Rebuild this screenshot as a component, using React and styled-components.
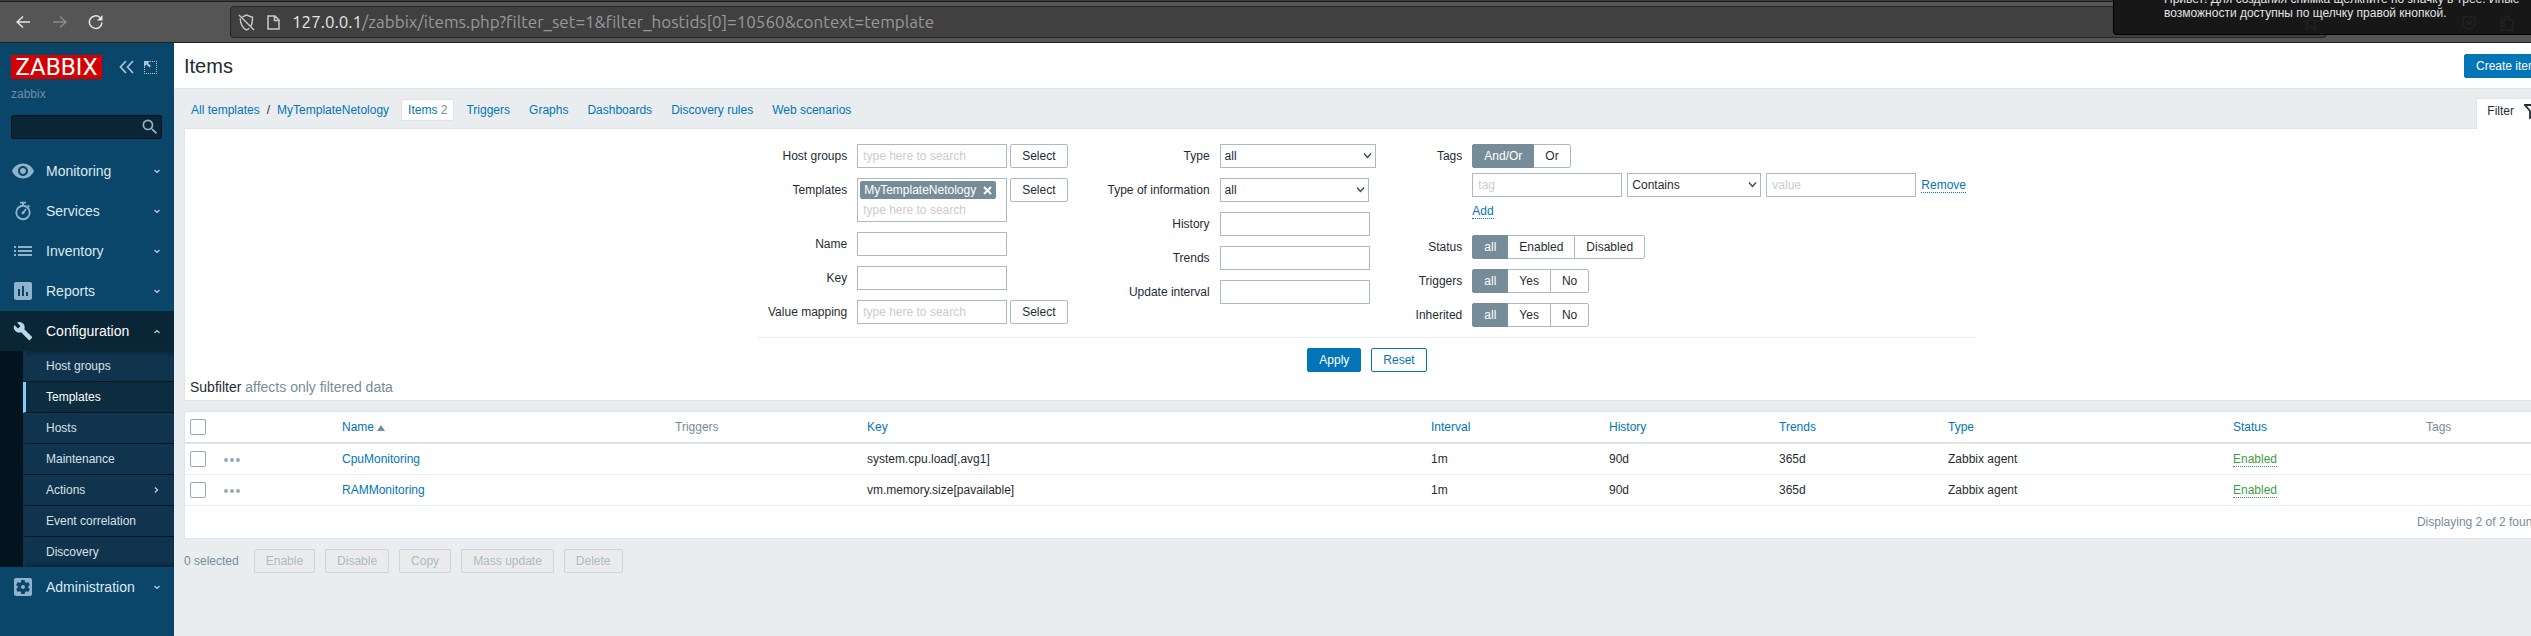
import React from "react";
import styled, { createGlobalStyle, css } from "styled-components";
import { MdVisibility, MdInsertChart, MdBuild, MdSettingsApplications, MdSearch } from "react-icons/md";

const GlobalStyle = createGlobalStyle`
  *, *::before, *::after { box-sizing: border-box; }
  body {
    margin: 0;
    background: #e9edf0;
    color: #1f2c33;
    font: 12px/18px "Liberation Sans", Arial, sans-serif;
  }
  input, button, select { font: inherit; color: inherit; }
  a { color: #0275b8; text-decoration: none; }
`;

const Viewport = styled.div`
  overflow: hidden;
  min-height: 100vh;
  display: flex;
`;

const Window = styled.div`
  position: relative;
  flex: 0 0 calc(100% + 29px);
  display: flex;
  flex-direction: column;
`;

/* Browser chrome */

const TabStrip = styled.div`
  height: 2px;
  background: #3b3b3b;
  border-bottom: 1px solid #1e1e1e;
`;

const Toolbar = styled.div`
  display: flex;
  align-items: center;
  height: 41px;
  padding: 0 16px;
  background: #555;
  border-bottom: 1px solid #222;
`;

const NavButtons = styled.div`
  display: flex;
  gap: 20px;
  width: 214px;
`;

const NavButton = styled.button`
  display: flex;
  padding: 0;
  border: 0;
  background: none;
  color: ${(p) => (p.disabled ? "#8a8a8a" : "#e6e6e6")};
`;

const AddressBar = styled.div`
  flex: 1;
  display: flex;
  align-items: center;
  gap: 12px;
  height: 32px;
  margin-right: 217px;
  padding: 0 7px;
  border: 1px solid #272727;
  border-radius: 4px;
  background: #404040;
  color: #c9c9c9;
`;

const Url = styled.div`
  color: #989898;
  font: 17px/30px Ubuntu, "Noto Sans", sans-serif;
  white-space: nowrap;
`;

const UrlHost = styled.span`
  color: #e4e4e4;
`;

const Notification = styled.div`
  position: absolute;
  top: 0;
  right: 0;
  display: flex;
  align-items: flex-end;
  width: 447px;
  height: 35px;
  padding: 0 16px 14px 50px;
  border: 1px solid #000;
  border-width: 0 0 1px 1px;
  border-bottom-left-radius: 4px;
  background: #171717;
  color: #e3e3e3;
  line-height: 14px;
  overflow: hidden;
`;

const NotificationText = styled.p`
  position: relative;
  z-index: 1;
  margin: 0;
  white-space: nowrap;
`;

const GhostIcons = styled.div`
  position: absolute;
  top: 15px;
  right: 0;
  display: flex;
  align-items: center;
  width: 257px;
  color: #222;
`;

const GhostIcon = styled.svg`
  flex: none;
  margin-right: ${(p) => p.$gap}px;
`;

/* Sidebar */

const Body = styled.div`
  flex: 1;
  display: flex;
`;

const Sidebar = styled.aside`
  flex: none;
  width: 174px;
  background: #0a466a;
`;

const Brand = styled.div`
  display: flex;
  align-items: center;
  padding: 12px 0 0 11px;
`;

const Logo = styled.a`
  flex: none;
  display: flex;
  justify-content: center;
  width: 91px;
  height: 24px;
  margin-right: 17px;
  background: #d40000;
  color: #fff;
  font: 24px/24px Roboto, "Liberation Sans", sans-serif;
`;

const BrandButton = styled.button`
  display: flex;
  margin-right: 10px;
  padding: 0;
  border: 0;
  background: none;
  color: #a9c4d6;
`;

const ServerName = styled.div`
  padding: 6px 11px 0;
  color: #6b8fa6;
`;

const Search = styled.form`
  display: flex;
  align-items: center;
  height: 24px;
  margin: 12px 12px 12px 11px;
  border: 1px solid #04121b;
  border-radius: 2px;
  background: #0a2536;
`;

const SearchInput = styled.input`
  flex: 1;
  min-width: 0;
  height: 22px;
  padding: 0 5px;
  border: 0;
  background: none;
  color: #fff;
  outline: 0;
`;

const SearchButton = styled.button`
  display: flex;
  padding: 0 1px 0 0;
  border: 0;
  background: none;
  color: #8fb3ca;
`;

const MenuLink = styled.a`
  display: flex;
  align-items: center;
  height: 40px;
  padding: 0 13px 0 11px;
  background: ${(p) => (p.$open ? "#0a2536" : "transparent")};
  color: ${(p) => (p.$open ? "#fff" : "#dfe8ee")};
  font-size: 14px;
`;

const MenuIcon = styled.span`
  display: flex;
  justify-content: center;
  width: 24px;
  margin-right: 11px;
  color: ${(p) => (p.$open ? "#b9d8ec" : "#8fb3ca")};
`;

const MenuLabel = styled.span`
  flex: 1;
`;

const SubMenu = styled.div`
  padding-left: 23px;
  background: #04141e;
`;

const SubLink = styled.a`
  display: flex;
  align-items: center;
  height: 31px;
  padding: 0 14px 0 20px;
  border-left: 3px solid ${(p) => (p.$active ? "#7ecbff" : "transparent")};
  border-bottom: 1px solid #051721;
  background: ${(p) => (p.$active ? "#0c2c40" : "#10344e")} border-box;
  color: ${(p) => (p.$active ? "#fff" : "#d5e0e7")};
  &:first-child { box-shadow: inset 0 6px 5px -4px #0a2536; }
  &:last-child {
    height: 30px;
    border-bottom: 0;
    box-shadow: inset 0 -6px 5px -4px #0a2536;
  }
`;

/* Buttons and fields */

const Button = styled.button`
  height: 24px;
  padding: 0 11px;
  border: 1px solid #acbbc2;
  border-radius: 2px;
  background: #fff;
  white-space: nowrap;
  line-height: 22px;
  ${(p) => p.$kind === "primary" && css`
    border-color: #0275b8;
    background: #0275b8;
    color: #fff;
  `}
  ${(p) => p.$kind === "outline" && css`
    border-color: #0275b8;
    color: #0275b8;
  `}
  &:disabled {
    border-color: #ccd5d9;
    background: #ebebeb;
    color: #acbbc2;
  }
`;

const TextInput = styled.input`
  width: 150px;
  height: 24px;
  padding: 0 5px;
  border: 1px solid #acbbc2;
  border-radius: 0;
  background: #fff;
  &::placeholder { color: #ccc; opacity: 1; }
`;

const SelectWrap = styled.span`
  position: relative;
  display: block;
  width: ${(p) => p.$width}px;
`;

const SelectBox = styled.select`
  appearance: none;
  width: 100%;
  height: 24px;
  padding: 0 4px;
  border: 1px solid #acbbc2;
  border-radius: 0;
  background: #fff;
`;

const SelectArrow = styled.svg`
  position: absolute;
  top: 8px;
  right: 4px;
  pointer-events: none;
`;

const TokenBox = styled.div`
  width: 150px;
  height: 44px;
  padding: 2px 2px 0;
  border: 1px solid #acbbc2;
`;

const Token = styled.span`
  display: flex;
  align-items: center;
  gap: 7px;
  width: max-content;
  height: 18px;
  padding: 0 4px;
  border-radius: 2px;
  background: #768d99;
  color: #fff;
`;

const TokenRemove = styled.button`
  display: flex;
  padding: 0;
  border: 0;
  background: none;
`;

const TokenInput = styled.input`
  display: block;
  width: 100%;
  height: 22px;
  padding: 0 3px;
  border: 0;
  background: none;
  outline: 0;
  &::placeholder { color: #ccc; opacity: 1; }
`;

const Segments = styled.div`
  display: flex;
`;

const Segment = styled.label`
  height: 24px;
  padding: 0 11px;
  border: 1px solid #acbbc2;
  background: #fff;
  line-height: 22px;
  & + & { margin-left: -1px; }
  &:first-child { border-radius: 2px 0 0 2px; }
  &:last-child { border-radius: 0 2px 2px 0; }
  &:has(input:checked) {
    position: relative;
    border-color: #768d99;
    background: #768d99;
    color: #fff;
  }
`;

const HiddenRadio = styled.input`
  position: absolute;
  opacity: 0;
  pointer-events: none;
`;

const DottedLink = styled.a`
  border-bottom: 1px dotted #0275b8;
  line-height: 14px;
`;

/* Content */

const Main = styled.main`
  flex: 1;
  min-width: 0;
`;

const PageHeader = styled.header`
  display: flex;
  align-items: center;
  justify-content: space-between;
  height: 46px;
  padding: 0 10px;
  border-bottom: 1px solid #dfe4e7;
  background: #fff;
`;

const Title = styled.h1`
  margin: 0;
  font-size: 20px;
  font-weight: 400;
  line-height: 24px;
`;

const Content = styled.div`
  padding: 0 10px;
`;

const TopRow = styled.div`
  display: flex;
  align-items: flex-end;
  justify-content: space-between;
`;

const Crumbs = styled.nav`
  display: flex;
  align-items: center;
  gap: 5px;
  height: 39px;
  padding-top: 2px;
`;

const Crumb = styled.a`
  height: 22px;
  padding: 0 6px;
  border: 1px solid ${(p) => (p.$active ? "#dfe4e7" : "transparent")};
  border-radius: 2px;
  background: ${(p) => (p.$active ? "#fff" : "none")};
  line-height: 20px;
`;

const Path = styled.div`
  display: flex;
  padding: 0 7px;
  gap: 7px;
`;

const Count = styled.span`
  color: #768d99;
`;

const FilterTab = styled.button`
  position: relative;
  display: flex;
  align-items: center;
  gap: 10px;
  height: 31px;
  margin-bottom: -1px;
  padding: 0 9px 6px 10px;
  border: 1px solid #dfe4e7;
  border-bottom: 0;
  border-radius: 2px 2px 0 0;
  background: #fff;
`;

const Panel = styled.section`
  border: 1px solid #dfe4e7;
  background: #fff;
`;

const FilterForm = styled.form`
  display: flex;
  flex-direction: column;
  align-items: center;
  padding-top: 15px;
`;

const FilterColumns = styled.div`
  display: flex;
  gap: 40px;
  padding: 0 10px 10px;
  border-bottom: 1px solid #ebeef0;
`;

const FieldGrid = styled.div`
  display: grid;
  grid-template-columns: auto auto;
  gap: 10px;
  align-content: start;
`;

const FieldLabel = styled.label`
  line-height: 24px;
  text-align: right;
  white-space: nowrap;
`;

const FieldRow = styled.div`
  display: flex;
  align-items: flex-start;
  gap: 3px;
`;

const TagFields = styled.div`
  display: grid;
  gap: 5px;
`;

const TagRow = styled.div`
  display: flex;
  align-items: center;
  gap: 5px;
`;

const AddRow = styled.div`
  height: 23px;
  line-height: 18px;
`;

const FormButtons = styled.div`
  display: flex;
  gap: 10px;
  padding-top: 10px;
`;

const Subfilter = styled.h2`
  margin: 0;
  padding: 6px 5px 4px;
  font-size: 14px;
  font-weight: 400;
  line-height: 18px;
`;

const Muted = styled.span`
  color: #768d99;
`;

const TablePanel = styled(Panel)`
  margin-top: 10px;
`;

const Table = styled.table`
  width: 100%;
  table-layout: fixed;
  border-collapse: separate;
  border-spacing: 0;
`;

const Th = styled.th`
  height: 32px;
  padding: 0 5px;
  border-bottom: 2px solid #dfe4e7;
  color: #768d99;
  font-weight: 400;
  text-align: left;
`;

const Td = styled.td`
  height: 31px;
  padding: 0 5px;
  border-bottom: 1px solid #ebeef0;
`;

const Checkbox = styled.input`
  appearance: none;
  display: block;
  width: 16px;
  height: 16px;
  margin: 0;
  border: 1px solid #97aab3;
  border-radius: 2px;
  background: #fff;
`;

const SortArrow = styled.span`
  display: inline-block;
  margin-left: 3px;
  border: 4px solid transparent;
  border-top: 0;
  border-bottom: 6px solid #768d99;
`;

const MoreButton = styled.button`
  display: flex;
  padding: 2px 0 0;
  border: 0;
  background: none;
`;

const StatusLink = styled.a`
  border-bottom: 1px dotted #429e47;
  color: #429e47;
`;

const TableFooter = styled.div`
  padding: 7px 10px;
  color: #768d99;
  text-align: right;
`;

const Actions = styled.div`
  display: flex;
  align-items: center;
  gap: 10px;
  padding: 10px 0;
`;

const Selected = styled.span`
  margin-right: 5px;
  color: #768d99;
`;

const Chevron = ({ dir = "down" }) => {
  const d = { down: "M1.500 3L4 5.500 6.500 3", up: "M1.500 6L4 3.500 6.500 6", right: "M3 1.500L5.500 4 3 6.500" }[dir];
  return (
    <svg width="8" height="8" viewBox="0 0 8 8" fill="none" stroke="#c3d5e0" strokeWidth="1.2">
      <path d={d} />
    </svg>
  );
};

const StopwatchIcon = () => (
  <svg width="20" height="20" viewBox="0 0 20 20" fill="none" stroke="currentColor" strokeWidth="1.9">
    <circle cx="10" cy="11.5" r="6.7" />
    <path d="M7 1.6h6M10 2v3M15 4.4l1.4 1.4" />
    <circle cx="10" cy="11.8" r="1.5" fill="currentColor" stroke="none" />
    <path d="M10 12l3-4" />
  </svg>
);

const ListIcon = () => (
  <svg width="18" height="12" viewBox="0 0 18 12" fill="currentColor">
    {[1, 5, 9].map((y) => (
      <path key={y} d={`M0 ${y}h2v2H0zM4 ${y}h14v2H4z`} />
    ))}
  </svg>
);

const Select = ({ id, width, value, label }) => (
  <SelectWrap $width={width}>
    <SelectBox id={id} defaultValue={value} aria-label={label}>
      <option>{value}</option>
    </SelectBox>
    <SelectArrow width="9" height="8" viewBox="0 0 9 8" fill="none" stroke="#39464d" strokeWidth="1.3">
      <path d="M1 1.5l3.5 4 3.5-4" />
    </SelectArrow>
  </SelectWrap>
);

const RadioGroup = ({ name, label, options }) => (
  <Segments role="radiogroup" aria-label={label}>
    {options.map((option, i) => (
      <Segment key={option}>
        <HiddenRadio type="radio" name={name} defaultChecked={i === 0} />
        {option}
      </Segment>
    ))}
  </Segments>
);

const menuTop = [
  ["Monitoring", <MdVisibility size={24} />],
  ["Services", <StopwatchIcon />],
  ["Inventory", <ListIcon />],
  ["Reports", <MdInsertChart size={24} />],
];

const subMenu = ["Host groups", "Templates", "Hosts", "Maintenance", "Actions", "Event correlation", "Discovery"];

const columns = [
  ["", 34],
  ["", 118],
  ["Name", 333, true],
  ["Triggers", 192],
  ["Key", 564, true],
  ["Interval", 178, true],
  ["History", 170, true],
  ["Trends", 169, true],
  ["Type", 285, true],
  ["Status", 193, true],
  ["Tags", 128],
];

const items = [
  { name: "CpuMonitoring", key: "system.cpu.load[,avg1]" },
  { name: "RAMMonitoring", key: "vm.memory.size[pavailable]" },
];

const MenuItem = ({ label, icon, open }) => (
  <MenuLink href="#" $open={open}>
    <MenuIcon $open={open}>{icon}</MenuIcon>
    <MenuLabel>{label}</MenuLabel>
    <Chevron dir={open ? "up" : "down"} />
  </MenuLink>
);

const BrowserBar = () => (
  <>
    <TabStrip />
    <Toolbar>
      <NavButtons>
        <NavButton aria-label="Back">
          <svg width="16" height="16" viewBox="0 0 16 16" fill="none" stroke="currentColor" strokeWidth="1.5">
            <path d="M14 8H1M7 2.500L1 8l6 5.500" />
          </svg>
        </NavButton>
        <NavButton aria-label="Forward" disabled>
          <svg width="16" height="16" viewBox="0 0 16 16" fill="none" stroke="currentColor" strokeWidth="1.5">
            <path d="M1 8h13M8 2.500L14 8l-6 5.500" />
          </svg>
        </NavButton>
        <NavButton aria-label="Reload">
          <svg width="16" height="16" viewBox="0 0 16 16" fill="none" stroke="currentColor" strokeWidth="1.5">
            <path d="M14 8.500A6.300 6.300 0 1 1 12 3.500" />
            <path d="M14.500 1v5.500H9z" fill="currentColor" stroke="none" />
          </svg>
        </NavButton>
      </NavButtons>
      <AddressBar>
        <svg width="17" height="17" viewBox="0 0 17 17" fill="none" stroke="currentColor" strokeWidth="1.4">
          <path d="M4.500 2.800L8.500 1l6 2.300c0 4-.3 6.500-1.500 8.700M11.300 14.300l-2.800 1.700C4 13.800 2.500 10 2.200 4.500M1 1l15 15" />
        </svg>
        <svg width="13" height="15" viewBox="0 0 13 15" fill="none" stroke="currentColor" strokeWidth="1.5">
          <path d="M1 1h7l4 4v9H1zM7.500 1v4.500H12" />
        </svg>
        <Url>
          <UrlHost>127.0.0.1</UrlHost>/zabbix/items.php?filter_set=1&amp;filter_hostids[0]=10560&amp;context=template
        </Url>
      </AddressBar>
    </Toolbar>
    <Notification role="status">
      <NotificationText>
        Привет! Для создания снимка щёлкните по значку в трее. Иные
        <br />
        возможности доступны по щелчку правой кнопкой.
      </NotificationText>
      <GhostIcons aria-hidden="true">
        <GhostIcon $gap={142} width="16" height="16" viewBox="0 0 16 16" fill="none" stroke="currentColor" strokeWidth="1.3">
          <path d="M8 1l2 5h5l-4 3 1.500 5.500L8 11.500l-4.500 3L5 9 1 6h5z" />
        </GhostIcon>
        <GhostIcon $gap={22} width="16" height="16" viewBox="0 0 16 16" fill="none" stroke="currentColor" strokeWidth="1.5">
          <path d="M2 2h12v6a6 6 0 0 1-12 0zM5 6l3 3 3-3" />
        </GhostIcon>
        <GhostIcon $gap={22} width="16" height="16" viewBox="0 0 16 16" fill="none" stroke="currentColor" strokeWidth="1.5">
          <path d="M2 5h4V3a2 2 0 0 1 4 0v2h4v10H2v-4h2a1.500 1.500 0 0 0 0-3H2z" />
        </GhostIcon>
        <GhostIcon $gap={0} width="16" height="16" viewBox="0 0 16 16" stroke="currentColor" strokeWidth="1.5">
          <path d="M1 3h14M1 8h14M1 13h14" />
        </GhostIcon>
      </GhostIcons>
    </Notification>
  </>
);

const SideNav = () => (
  <Sidebar>
    <Brand>
      <Logo href="#">ZABBIX</Logo>
      <BrandButton aria-label="Collapse sidebar">
        <svg width="15" height="14" viewBox="0 0 15 14" fill="none" stroke="currentColor" strokeWidth="1.7">
          <path d="M7 1L1.500 7 7 13M14 1L8.500 7l5.500 6" />
        </svg>
      </BrandButton>
      <BrandButton aria-label="Hide sidebar">
        <svg width="13" height="13" viewBox="0 0 13 13" fill="none" stroke="currentColor">
          <path d="M6 .500h7M12.500 2v11M.500 6v7M0 12.500h13" strokeDasharray="1 1" />
          <path d="M0 0h6L4 2l3 3-1.500 1.500L2.500 3.500 0 6z" fill="currentColor" stroke="none" />
        </svg>
      </BrandButton>
    </Brand>
    <ServerName>zabbix</ServerName>
    <Search role="search">
      <SearchInput aria-label="Search" />
      <SearchButton type="button" aria-label="Search">
        <MdSearch size={20} />
      </SearchButton>
    </Search>
    <nav>
      {menuTop.map(([label, icon]) => (
        <MenuItem key={label} label={label} icon={icon} />
      ))}
      <MenuItem label="Configuration" icon={<MdBuild size={20} />} open />
      <SubMenu>
        {subMenu.map((label) => (
          <SubLink key={label} href="#" $active={label === "Templates"}>
            <MenuLabel>{label}</MenuLabel>
            {label === "Actions" && <Chevron dir="right" />}
          </SubLink>
        ))}
      </SubMenu>
      <MenuItem label="Administration" icon={<MdSettingsApplications size={24} />} />
    </nav>
  </Sidebar>
);

const Filter = () => (
  <Panel>
    <FilterForm>
      <FilterColumns>
        <FieldGrid>
          <FieldLabel htmlFor="groups">Host groups</FieldLabel>
          <FieldRow>
            <TextInput id="groups" placeholder="type here to search" />
            <Button type="button">Select</Button>
          </FieldRow>
          <FieldLabel htmlFor="templates">Templates</FieldLabel>
          <FieldRow>
            <TokenBox>
              <Token>
                MyTemplateNetology
                <TokenRemove type="button" aria-label="Remove MyTemplateNetology">
                  <svg width="9" height="9" viewBox="0 0 9 9" stroke="#fff" strokeWidth="2">
                    <path d="M1 1l7 7M8 1L1 8" />
                  </svg>
                </TokenRemove>
              </Token>
              <TokenInput id="templates" placeholder="type here to search" />
            </TokenBox>
            <Button type="button">Select</Button>
          </FieldRow>
          <FieldLabel htmlFor="name">Name</FieldLabel>
          <TextInput id="name" />
          <FieldLabel htmlFor="key">Key</FieldLabel>
          <TextInput id="key" />
          <FieldLabel htmlFor="mapping">Value mapping</FieldLabel>
          <FieldRow>
            <TextInput id="mapping" placeholder="type here to search" />
            <Button type="button">Select</Button>
          </FieldRow>
        </FieldGrid>
        <FieldGrid>
          <FieldLabel htmlFor="type">Type</FieldLabel>
          <Select id="type" width={156} value="all" />
          <FieldLabel htmlFor="info">Type of information</FieldLabel>
          <Select id="info" width={149} value="all" />
          <FieldLabel htmlFor="history">History</FieldLabel>
          <TextInput id="history" />
          <FieldLabel htmlFor="trends">Trends</FieldLabel>
          <TextInput id="trends" />
          <FieldLabel htmlFor="interval">Update interval</FieldLabel>
          <TextInput id="interval" />
        </FieldGrid>
        <FieldGrid>
          <FieldLabel as="span">Tags</FieldLabel>
          <TagFields>
            <RadioGroup name="tags" label="Tags" options={["And/Or", "Or"]} />
            <TagRow>
              <TextInput placeholder="tag" aria-label="Tag" />
              <Select width={134} value="Contains" label="Operator" />
              <TextInput placeholder="value" aria-label="Value" />
              <DottedLink href="#">Remove</DottedLink>
            </TagRow>
            <AddRow>
              <DottedLink href="#">Add</DottedLink>
            </AddRow>
          </TagFields>
          <FieldLabel as="span">Status</FieldLabel>
          <RadioGroup name="status" label="Status" options={["all", "Enabled", "Disabled"]} />
          <FieldLabel as="span">Triggers</FieldLabel>
          <RadioGroup name="triggers" label="Triggers" options={["all", "Yes", "No"]} />
          <FieldLabel as="span">Inherited</FieldLabel>
          <RadioGroup name="inherited" label="Inherited" options={["all", "Yes", "No"]} />
        </FieldGrid>
      </FilterColumns>
      <FormButtons>
        <Button type="button" $kind="primary">Apply</Button>
        <Button type="reset" $kind="outline">Reset</Button>
      </FormButtons>
    </FilterForm>
    <Subfilter>
      Subfilter <Muted>affects only filtered data</Muted>
    </Subfilter>
  </Panel>
);

const ItemsTable = () => (
  <TablePanel>
    <Table>
      <colgroup>
        {columns.map(([, width], i) => (
          <col key={i} width={width} />
        ))}
      </colgroup>
      <thead>
        <tr>
          {columns.map(([label, , sortable], i) => (
            <Th key={i}>
              {i === 0 && <Checkbox type="checkbox" aria-label="Select all" />}
              {sortable ? <a href="#">{label}</a> : label}
              {label === "Name" && <SortArrow />}
            </Th>
          ))}
        </tr>
      </thead>
      <tbody>
        {items.map((item) => (
          <tr key={item.name}>
            <Td><Checkbox type="checkbox" aria-label={`Select ${item.name}`} /></Td>
            <Td>
              <MoreButton aria-label="More">
                <svg width="16" height="4" viewBox="0 0 16 4" fill="#97aab3">
                  <circle cx="2" cy="2" r="2" />
                  <circle cx="8" cy="2" r="2" />
                  <circle cx="14" cy="2" r="2" />
                </svg>
              </MoreButton>
            </Td>
            <Td><a href="#">{item.name}</a></Td>
            <Td />
            <Td>{item.key}</Td>
            <Td>1m</Td>
            <Td>90d</Td>
            <Td>365d</Td>
            <Td>Zabbix agent</Td>
            <Td><StatusLink href="#">Enabled</StatusLink></Td>
            <Td />
          </tr>
        ))}
      </tbody>
    </Table>
    <TableFooter>Displaying 2 of 2 found</TableFooter>
  </TablePanel>
);

export default function App() {
  return (
    <Viewport>
      <GlobalStyle />
      <Window>
        <BrowserBar />
        <Body>
          <SideNav />
          <Main>
            <PageHeader>
              <Title>Items</Title>
              <Button $kind="primary">Create item</Button>
            </PageHeader>
            <Content>
              <TopRow>
                <Crumbs>
                  <Path>
                    <a href="#">All templates</a>
                    <span>/</span>
                    <a href="#">MyTemplateNetology</a>
                  </Path>
                  <Crumb href="#" $active>
                    Items <Count>2</Count>
                  </Crumb>
                  {["Triggers", "Graphs", "Dashboards", "Discovery rules", "Web scenarios"].map((label) => (
                    <Crumb key={label} href="#">{label}</Crumb>
                  ))}
                </Crumbs>
                <FilterTab>
                  Filter
                  <svg width="16" height="16" viewBox="0 0 16 16" fill="none" stroke="#1f2c33" strokeWidth="1.8">
                    <path d="M1 2h14l-5 6v5.500l-4 1.500V8z" />
                  </svg>
                </FilterTab>
              </TopRow>
              <Filter />
              <ItemsTable />
              <Actions>
                <Selected>0 selected</Selected>
                {["Enable", "Disable", "Copy", "Mass update", "Delete"].map((label) => (
                  <Button key={label} disabled>{label}</Button>
                ))}
              </Actions>
            </Content>
          </Main>
        </Body>
      </Window>
    </Viewport>
  );
}
